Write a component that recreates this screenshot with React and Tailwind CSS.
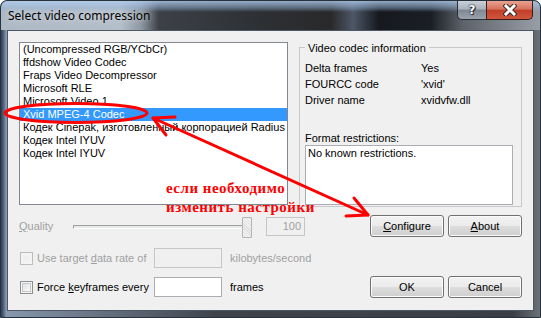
import React from "react";

const items = [
  "(Uncompressed RGB/YCbCr)",
  "ffdshow Video Codec",
  "Fraps Video Decompressor",
  "Microsoft RLE",
  "Microsoft Video 1",
  "Xvid MPEG-4 Codec",
  "Кодек Cinepak, изготовленный корпорацией Radius",
  "Кодек Intel IYUV",
  "Кодек Intel IYUV",
];

function Btn({ children }) {
  return (
    <div className="w-[74px] h-[22px] rounded-[3px] border border-[#707070] bg-[linear-gradient(to_bottom,#f2f2f2_0%,#ebebeb_50%,#dddddd_51%,#cfcfcf_100%)] shadow-[inset_0_0_0_1px_#fcfcfc] flex items-center justify-center leading-[14px]">
      {children}
    </div>
  );
}

function Check({ disabled }) {
  return (
    <div
      className={
        disabled
          ? "w-[13px] h-[13px] border border-[#bcbcbc] bg-[#f4f4f4] p-[2px]"
          : "w-[13px] h-[13px] border border-[#8e8f8f] bg-[#f4f4f4] p-[1px]"
      }
    >
      <div
        className={
          disabled
            ? "w-full h-full bg-[#f0f0f0]"
            : "w-full h-full border border-[#c6c8cb] bg-[linear-gradient(135deg,#dfe1e3,#fbfbfb)]"
        }
      />
    </div>
  );
}

export default function App() {
  return (
    <div className="relative w-[541px] h-[318px] overflow-hidden rounded-t-[7px] border border-[#27303b] bg-[linear-gradient(to_right,#2f3d52_0px,#56698a_3px,#8797ad_5px,#3e434a_40%,#3b3f45_95%,#6c7178_100%)] font-['Liberation_Sans',Arial,sans-serif] text-[11px] text-black">
      {/* title bar */}
      <div className="h-[29px] flex items-start rounded-t-[6px] bg-[linear-gradient(to_bottom,rgba(175,205,238,0.8)_0px,rgba(150,182,218,0.45)_7px,rgba(0,0,0,0)_11px),linear-gradient(to_right,#aeb9c6_0px,#b3bec9_120px,#8e97a2_140px,#3d4147_158px,#2e3135_250px,#29292b_330px,#4d5766_352px,#16191e_378px,#1b1f25_430px,#5d636b_462px,#9aa0a7_541px)]">
        <div className="pl-[7px] pt-[7px] text-[12px] leading-[15px] text-black font-['Noto_Sans',sans-serif] [text-shadow:0_0_6px_rgba(255,255,255,0.7)]">
          Select video compression
        </div>
        <div className="ml-auto mr-[7px] flex h-[19px]">
          <div className="w-[29px] h-full border border-[#2a2f36] border-t-0 border-r-0 rounded-bl-[5px] bg-[linear-gradient(to_bottom,#c9d0d8_0%,#a9b1bb_45%,#7e8792_50%,#9aa3ad_100%)] flex items-center justify-center">
            <span className="font-['DejaVu_Sans',sans-serif] font-bold text-[12px] leading-[12px] text-white [text-shadow:0_0_1px_#000,0_0_2px_#222,1px_1px_0_#333]">
              ?
            </span>
          </div>
          <div className="w-[47px] h-full border border-[#3a1d18] border-t-0 rounded-br-[5px] bg-[linear-gradient(to_bottom,#e8a291_0%,#d5715c_45%,#c2402a_52%,#d0553d_100%)] flex items-center justify-center">
            <svg width="14" height="12" viewBox="0 0 14 12">
              <path d="M3 2 L11 10 M11 2 L3 10" stroke="#3a2a28" strokeWidth="5" strokeLinecap="square" />
              <path d="M3 2 L11 10 M11 2 L3 10" stroke="#ffffff" strokeWidth="3" strokeLinecap="square" />
            </svg>
          </div>
        </div>
      </div>

      {/* client area */}
      <div className="ml-[6px] w-[527px] h-[281px] border border-[#4d5766] bg-[#f0f0f0] pt-[11px] px-[11px]">
        <div className="flex items-start gap-[11px]">
          {/* list */}
          <div className="w-[269px] h-[163px] border border-[#828790] bg-white overflow-hidden">
            {items.map((t, i) => (
              <div
                key={i}
                className={
                  i === 5
                    ? "h-[13px] leading-[13px] px-[3px] whitespace-nowrap bg-[#3399ff] text-white"
                    : "h-[13px] leading-[13px] px-[3px] whitespace-nowrap"
                }
              >
                {t}
              </div>
            ))}
          </div>
          {/* group */}
          <div className="w-[223px] pt-[5px]">
            <div className="relative h-[160px] border border-[#c5c9cc] pt-[12px] px-[5px]">
              <div className="absolute -top-[7px] left-[5px] px-[3px] bg-[#f0f0f0] leading-[14px]">
                Video codec information
              </div>
              <div className="grid grid-cols-[116px_1fr] leading-[16px]">
                <div>Delta frames</div>
                <div>Yes</div>
                <div>FOURCC code</div>
                <div>'xvid'</div>
                <div>Driver name</div>
                <div>xvidvfw.dll</div>
              </div>
              <div className="mt-[23px] leading-[14px]">Format restrictions:</div>
              <div className="w-[208px] h-[60px] border border-[#abadb3] bg-white px-[2px] leading-[14px]">
                No known restrictions.
              </div>
            </div>
          </div>
        </div>

        {/* quality row */}
        <div className="mt-[8px] h-[22px] flex items-center">
          <div className="w-[54px] text-[#a0a0a0]">
            <u>Q</u>uality
          </div>
          <div className="relative w-[183px] h-[21px]">
            <div className="absolute left-0 right-[6px] top-[9px] h-[4px] border border-[#a0a0a0] border-b-white border-r-white bg-[#e7eaea]" />
            <div className="absolute left-[169px] top-[1px] w-[10px] h-[21px] border border-[#b5b5b5] rounded-[1px] bg-[repeating-linear-gradient(45deg,#f4f4f4_0px,#f4f4f4_1px,#dedede_1px,#dedede_2px)]" />
          </div>
          <div className="ml-[10px] w-[39px] h-[19px] border border-[#c4c6c9] bg-[#f0f0f0] text-right pr-[3px] leading-[17px] text-[#a0a0a0]">
            100
          </div>
          <div className="ml-auto flex gap-[4px]">
            <Btn>
              <span>
                <u>C</u>onfigure
              </span>
            </Btn>
            <Btn>
              <span>
                <u>A</u>bout
              </span>
            </Btn>
          </div>
        </div>

        {/* data rate row */}
        <div className="mt-[11px] h-[20px] flex items-center pl-[1px]">
          <Check disabled />
          <div className="ml-[4px] w-[117px] text-[#a0a0a0] whitespace-nowrap">
            Use target <u>d</u>ata rate of
          </div>
          <div className="w-[68px] h-[20px] border border-[#c4c6c9] bg-[#f0f0f0]" />
          <div className="ml-[8px] text-[#a0a0a0]">kilobytes/second</div>
        </div>

        {/* keyframes row */}
        <div className="mt-[8px] h-[22px] flex items-center pl-[1px]">
          <Check />
          <div className="ml-[4px] w-[117px] whitespace-nowrap">
            Force <u>k</u>eyframes every
          </div>
          <div className="w-[68px] h-[20px] border border-[#abadb3] bg-white" />
          <div className="ml-[8px]">frames</div>
          <div className="ml-auto flex gap-[4px]">
            <Btn>OK</Btn>
            <Btn>Cancel</Btn>
          </div>
        </div>
      </div>

      {/* red annotation overlay */}
      <svg
        className="absolute -left-[1px] -top-[1px] pointer-events-none"
        width="541"
        height="318"
        viewBox="0 0 541 318"
      >
        <ellipse cx="76" cy="113" rx="71" ry="9.5" fill="none" stroke="#ff0000" strokeWidth="3" />
        <line x1="153" y1="118" x2="368" y2="215" stroke="#ff0000" strokeWidth="3" strokeLinecap="round" />
        <polyline points="166,135 153,118 175,117" fill="none" stroke="#ff0000" strokeWidth="3" strokeLinecap="round" strokeLinejoin="round" />
        <polyline points="354,198 368,215 346,216" fill="none" stroke="#ff0000" strokeWidth="3" strokeLinecap="round" strokeLinejoin="round" />
      </svg>
      <div className="absolute left-[165px] top-[178px] font-['Liberation_Serif',serif] font-bold text-[15px] leading-[19px] tracking-[0.5px] text-[#ff0000] whitespace-nowrap pointer-events-none">
        <div>если необходимо</div>
        <div>изменить настройки</div>
      </div>
    </div>
  );
}
